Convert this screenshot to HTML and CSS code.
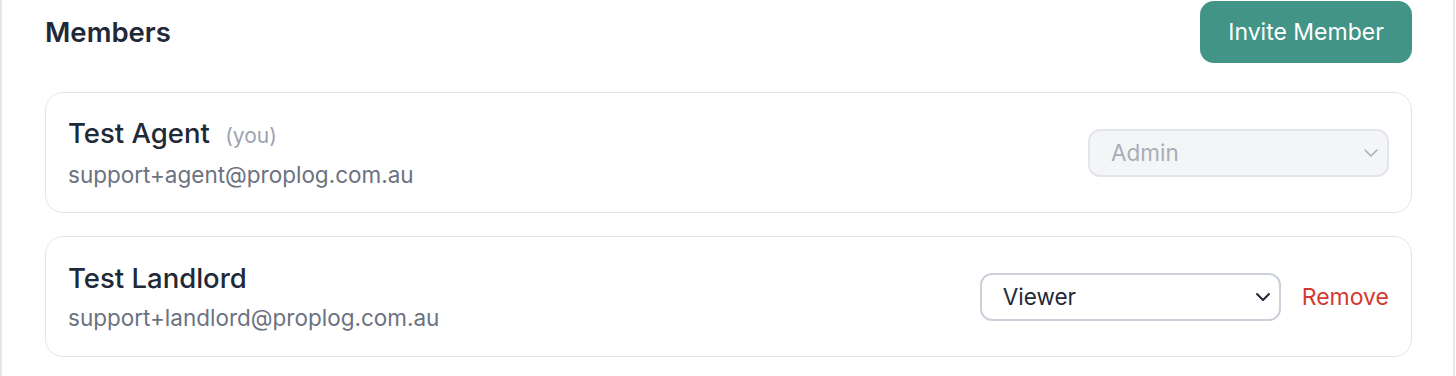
FILE: index.html
```html
<!DOCTYPE html>
<html lang="en">
<head>
<meta charset="utf-8">
<title>Members</title>
<link rel="stylesheet" href="styles.css">
</head>
<body>
<div class="panel">
  <div class="header">
    <h2 class="title">Members</h2>
    <button class="btn-invite" type="button">Invite Member</button>
  </div>
  <div class="list">
    <div class="card">
      <div class="info">
        <div class="name">Test Agent <span class="you">(you)</span></div>
        <div class="email">support+agent@proplog.com.au</div>
      </div>
      <div class="actions">
        <div class="select disabled">
          <span>Admin</span>
          <svg class="chev" width="16" height="10" viewBox="0 0 16 10"><path d="M2 2l6 6 6-6" fill="none" stroke="currentColor" stroke-width="1.5" stroke-linecap="round" stroke-linejoin="round"/></svg>
        </div>
      </div>
    </div>
    <div class="card">
      <div class="info">
        <div class="name">Test Landlord</div>
        <div class="email">support+landlord@proplog.com.au</div>
      </div>
      <div class="actions">
        <div class="select">
          <span>Viewer</span>
          <svg class="chev" width="16" height="10" viewBox="0 0 16 10"><path d="M2 2l6 6 6-6" fill="none" stroke="currentColor" stroke-width="2" stroke-linecap="round" stroke-linejoin="round"/></svg>
        </div>
        <span class="remove">Remove</span>
      </div>
    </div>
  </div>
</div>
</body>
</html>
```

FILE: styles.css
```css
* { box-sizing: border-box; }
html, body { margin: 0; padding: 0; background: #ffffff; }
body {
  font-family: Inter, "Noto Sans", sans-serif;
  color: #1f2937;
}
.panel {
  width: 1455px;
  height: 376px;
  border-left: 2px solid #e5e7eb;
  border-right: 2px solid #e5e7eb;
  padding: 0 41px 0 43px;
}
.header {
  display: flex;
  justify-content: space-between;
  align-items: center;
  height: 63px;
}
.title {
  margin: 0;
  font-size: 27.5px;
  font-weight: 600;
  color: #1f2937;
  line-height: 36px;
}
.btn-invite {
  border: none;
  background: #429487;
  color: #ffffff;
  font-family: inherit;
  font-size: 23px;
  height: 62px;
  width: 212px;
  border-radius: 14px;
  padding: 0;
}
.list {
  display: flex;
  flex-direction: column;
  gap: 23px;
  margin-top: 29px;
}
.card {
  border: 1px solid #e2e4e9;
  border-radius: 18px;
  height: 121px;
  padding: 0 22px;
  display: flex;
  align-items: center;
  justify-content: space-between;
}
.info {
  display: flex;
  flex-direction: column;
  gap: 6px;
  margin-top: 2px;
}
.name {
  font-size: 27.5px;
  line-height: 35px;
  color: #1f2937;
  font-weight: 500;
}
.you {
  font-size: 21px;
  color: #9ca3af;
  margin-left: 8px;
  font-weight: 400;
}
.email {
  font-size: 22.5px;
  line-height: 32px;
  color: #6b7280;
}
.actions {
  display: flex;
  align-items: center;
  gap: 21px;
}
.select {
  width: 301px;
  height: 48px;
  border: 2px solid #cbd0da;
  border-radius: 12px;
  display: flex;
  align-items: center;
  justify-content: space-between;
  padding: 0 8px 0 21px;
  font-size: 22.5px;
  color: #1f2937;
  background: #ffffff;
}
.select.disabled {
  background: #f4f5f7;
  border-color: #e3e5ea;
  color: #a9adb6;
}
.chev { display: block; }
.remove {
  color: #d23a30;
  font-size: 23px;
}
```
